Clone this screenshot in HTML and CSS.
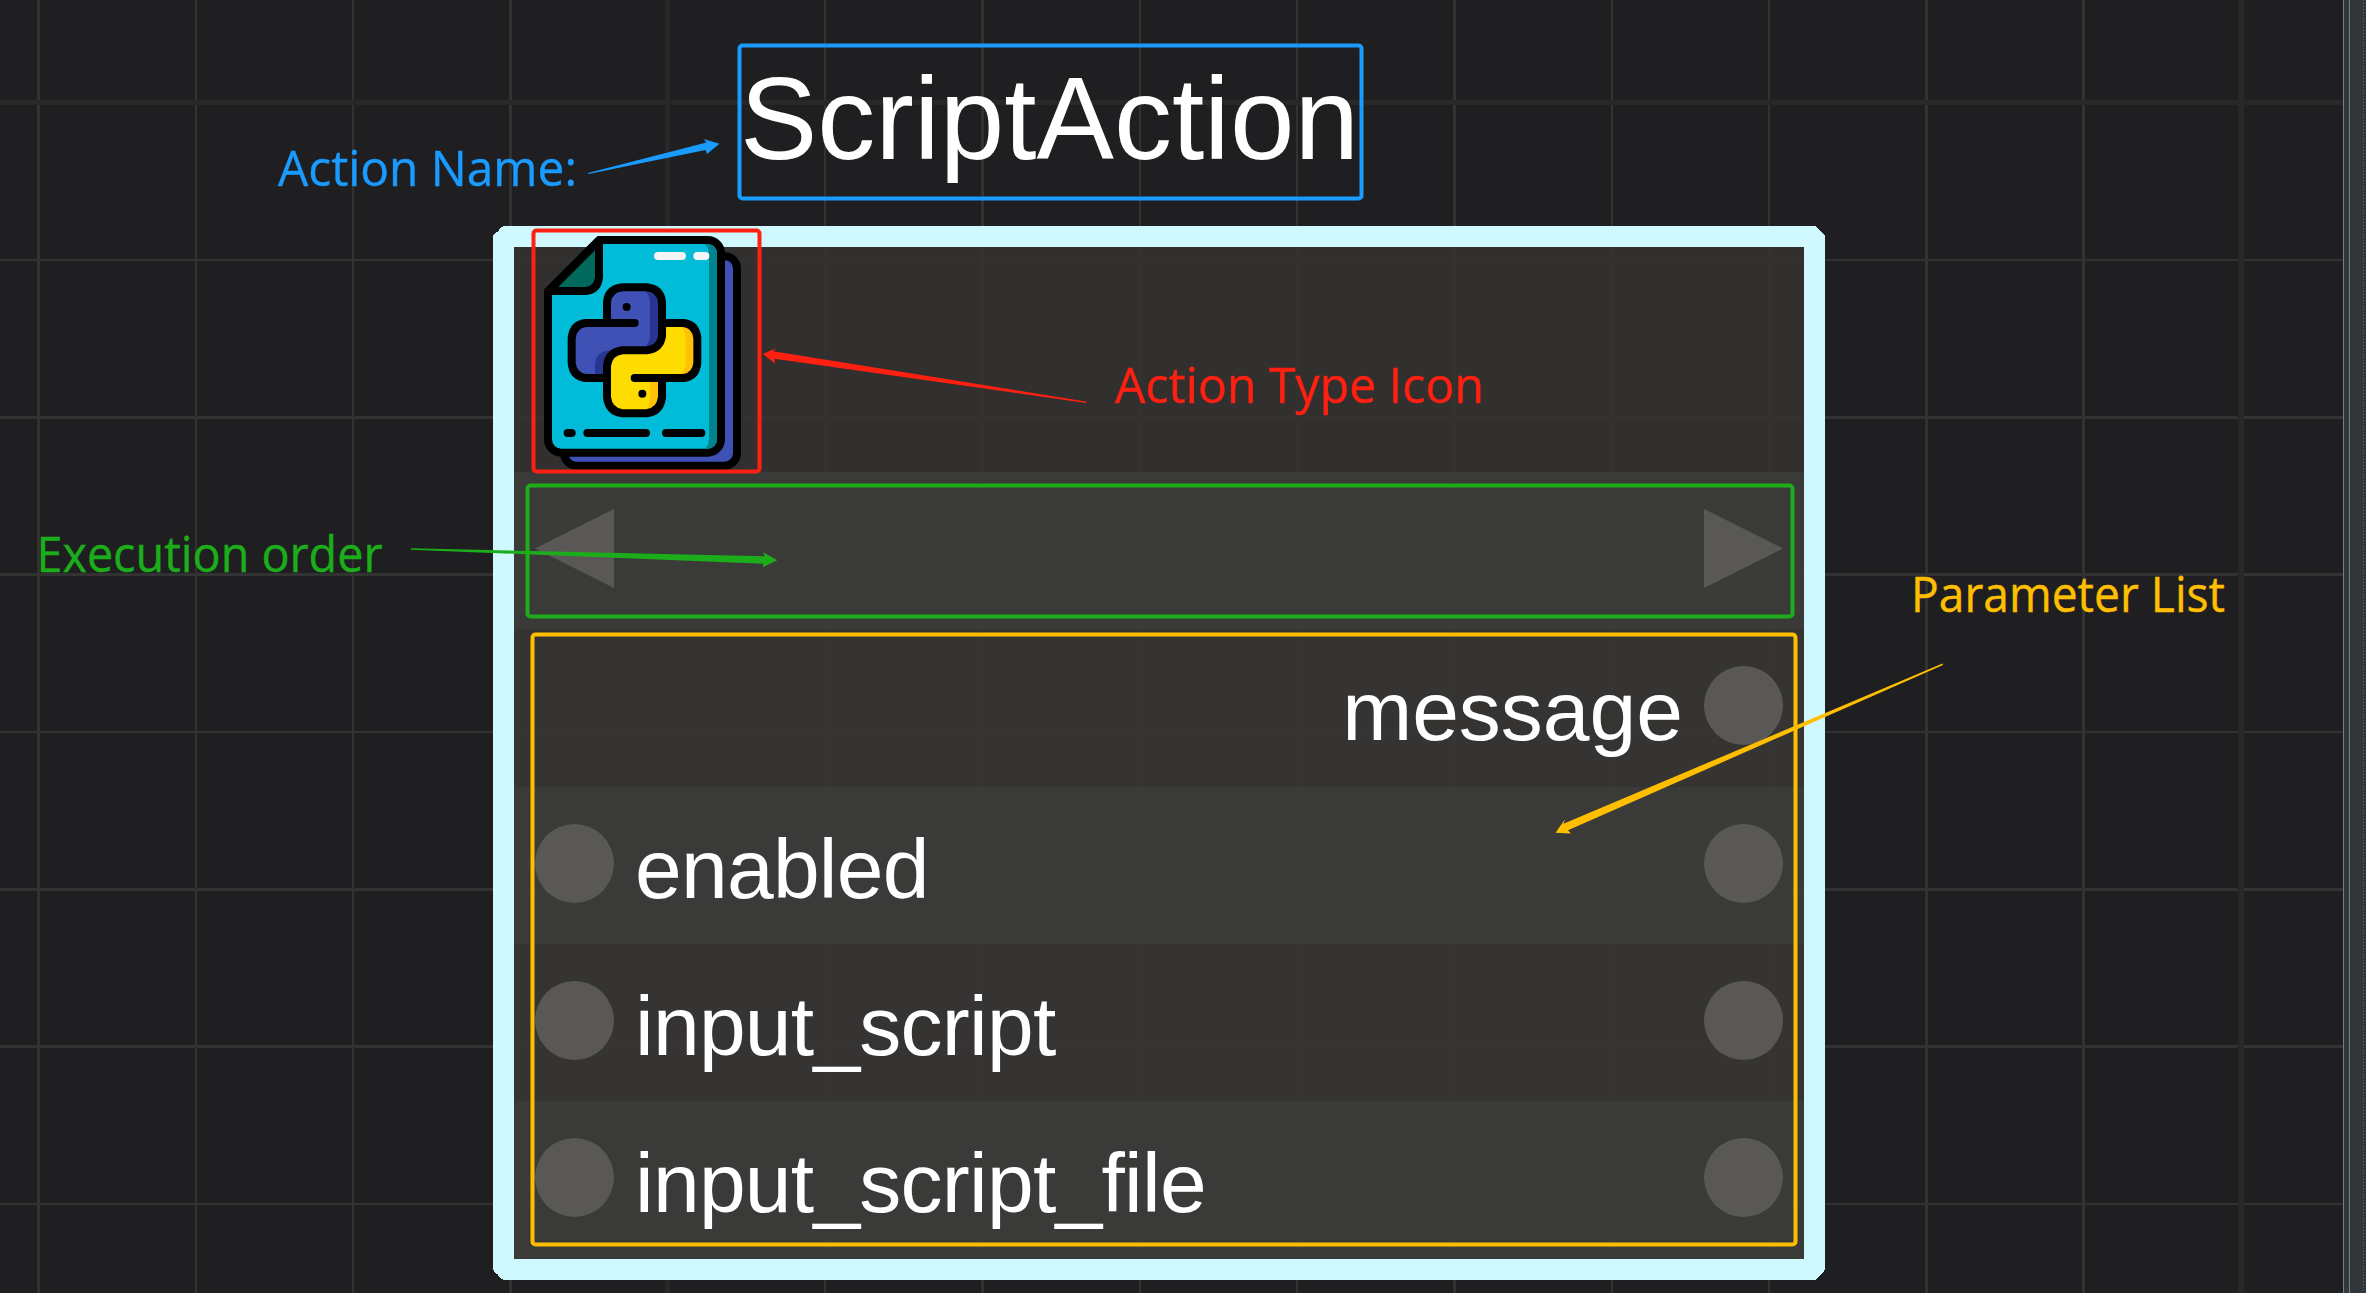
FILE: index.html
```
<!DOCTYPE html>
<html lang="en">
<head>
<meta charset="utf-8">
<title>ScriptAction</title>
<link rel="stylesheet" href="styles.css">
</head>
<body>
<main class="editor">
  <section class="canvas">
    <svg class="grid" width="2343" height="1293" shape-rendering="crispEdges">
      <path class="minor" stroke-width="2" d="M196 0V1293M353 0V1293M825 0V1293M1140 0V1293M1297 0V1293M1612 0V1293M1769 0V1293M0 260H2343M0 732H2343M0 1204H2343"/>
      <path class="minor" stroke-width="3" d="M38.500 0V1293M510.500 0V1293M982.500 0V1293M1454.500 0V1293M1926.500 0V1293M2083.500 0V1293M0 417.500H2343M0 574.500H2343M0 889.500H2343M0 1046.500H2343"/>
      <path class="major" stroke-width="5" d="M667.500 0V1293M0 102.500H2343"/>
      <path class="major" stroke-width="6" d="M2241 0V1293"/>
    </svg>

    <article class="node-group">
      <h1 class="node-title">ScriptAction</h1>
      <div class="node">
        <header class="row header">
          <svg class="type-icon" viewBox="0 0 960 840" width="320" height="280" fill="none" stroke-linecap="round" stroke-linejoin="round">
            <path d="M720 139H734A36 36 0 0 1 771 176V730A38 38 0 0 1 733 767H290A38 38 0 0 1 252 729V700Z" fill="#3f51b5" stroke="#000" stroke-width="24"/>
            <path d="M357 90H683A40 40 0 0 1 723 130V688A40 40 0 0 1 683 728H244A40 40 0 0 1 204 688V243Z" fill="#00bcd8" stroke="#000" stroke-width="24"/>
            <path d="M674 102H683A28 28 0 0 1 711 130V688A28 28 0 0 1 683 716H674Q687 706 687 686V132Q687 112 674 102Z" fill="#00838f"/>
            <path d="M357 92V202Q353 240 316 243H206Z" fill="#00695c" stroke="#000" stroke-width="24"/>
            <path d="M534 138H606M652 138H676" stroke="#f5f5f5" stroke-width="24"/>
            <path d="M546 339H612Q648 344 652 384V459Q648 499 612 504H546V562Q540 605 500 610H427Q386 605 381 562V467Q386 425 427 421H500Q540 415 546 378Z" fill="#ffdc00"/>
            <path d="M600 350H612Q640 355 640 384V459Q640 488 612 493H600Q617 484 617 459V384Q617 359 600 350Z" fill="#ffc107"/>
            <path d="M510 515H535V562Q533 593 500 598Q510 587 510 562Z" fill="#ffc107"/>
            <path d="M381 339V275Q386 236 427 232H500Q541 236 546 275V378Q541 416 500 421H427Q386 426 381 467V504H316Q279 499 275 459V384Q279 344 316 339Z" fill="#3f51b5"/>
            <path d="M494 244H500Q530 248 534 275V378Q530 405 497 409Q510 397 510 375V275Q508 252 494 244Z" fill="#283593"/>
            <path d="M392 421Q345 425 345 467V493H371V458Q372 438 392 421Z" fill="#283593"/>
            <path d="M464 339H316Q279 344 275 384V459Q279 499 316 504H381M381 339V275Q386 236 427 232H500Q541 236 546 275V378Q541 416 500 421H427Q386 426 381 467V562Q386 605 427 610H500Q541 605 546 562V504M464 504H612Q648 499 652 459V384Q648 344 612 339H546" stroke="#000" stroke-width="24"/>
            <circle cx="440" cy="291" r="12" fill="#000"/><circle cx="487" cy="551" r="12" fill="#000"/>
            <path d="M263 669H275M322 669H498M558 669H664" stroke="#000" stroke-width="24"/>
          </svg>
        </header>
        <div class="row even">
          <i class="port arrow-left"></i><span class="spacer"></span><i class="port arrow-right"></i>
        </div>
        <div class="row odd">
          <span class="spacer"></span><span class="name output">message</span><i class="port"></i>
        </div>
        <div class="row even">
          <i class="port"></i><span class="name">enabled</span><span class="spacer"></span><i class="port"></i>
        </div>
        <div class="row odd">
          <i class="port"></i><span class="name">input_script</span><span class="spacer"></span><i class="port"></i>
        </div>
        <div class="row even">
          <i class="port"></i><span class="name">input_script_file</span><span class="spacer"></span><i class="port"></i>
        </div>
      </div>
    </article>
  </section>
  <aside class="dock"><div class="splitter"></div><div class="panel"></div></aside>

  <svg class="notes" width="2366" height="1293">
    <g class="blue">
      <rect x="739.500" y="45.500" width="622" height="153" rx="3"/>
      <path d="M588 173L706.500 142.500L703.500 139L719.500 143.700L707 154L705.500 150L588.500 174Z"/>
      <text x="278" y="186" textLength="299" lengthAdjust="spacingAndGlyphs">Action Name:</text>
    </g>
    <g class="red">
      <rect x="533.500" y="230.500" width="226" height="241" rx="3"/>
      <path d="M1087 401.700L773 351.300L776.500 348L762.800 354L775 363.500L774.500 358.700L1086 403Z"/>
      <text x="1115" y="403" textLength="369" lengthAdjust="spacingAndGlyphs">Action Type Icon</text>
    </g>
    <g class="green">
      <rect x="527.500" y="485.500" width="1265" height="131" rx="3"/>
      <path d="M411 548.300L765 556.300L762.800 552L777.200 560.300L762.800 567.300L763.300 563.700L411 549.700Z"/>
      <text x="36.500" y="572" textLength="346" lengthAdjust="spacingAndGlyphs">Execution order</text>
    </g>
    <g class="amber">
      <rect x="532.500" y="634.500" width="1263" height="610" rx="3"/>
      <path d="M1942.500 663.500L1563.500 823.700L1565 819.300L1555.500 832.800L1571 833.500L1568 830.300L1943 665Z"/>
      <text x="1911" y="612" textLength="314" lengthAdjust="spacingAndGlyphs">Parameter List</text>
    </g>
  </svg>
</main>
</body>
</html>
```
FILE: styles.css
```
* { box-sizing: border-box; }
body { margin: 0; background: #1f1f21; overflow: hidden; }

.editor { display: flex; position: relative; width: 2366px; height: 1293px; }
.canvas { position: relative; flex: 1; height: 1293px; overflow: hidden; }
.grid { position: absolute; inset: 0; }
.minor { stroke: #323232; }
.major { stroke: #282828; }

.node-group { position: absolute; left: 493px; top: 46px; width: 1332px; }
.node-title {
  margin: 0 0 0 247px;
  height: 180px;
  color: #fff;
  font: 400 116px/147px "Liberation Sans", Arial, sans-serif;
}
.node {
  position: relative;
  height: 1054px;
  border: 21px solid #d0f8ff;
}
/* cut corners */
.node::before, .node::after {
  content: "";
  position: absolute;
  inset: -21px auto -21px -21px;
  width: 10px;
  background:
    linear-gradient(135deg, #1f1f21 50%, transparent 50%) 0 0 / 10px 10px no-repeat,
    linear-gradient(45deg, #1f1f21 50%, transparent 50%) 0 100% / 10px 10px no-repeat;
}
.node::after { inset: -21px -21px -21px auto; transform: scaleX(-1); }

.row { display: flex; align-items: flex-start; height: 157.350px; padding: 37px 21px 0 21px; }
.header { height: 225px; padding: 0; background: rgba(53, 51, 48, .87); }
.odd { background: rgba(55, 53, 51, .96); }
.even { background: rgba(59, 59, 57, .96); }
.type-icon { position: relative; flex: none; margin: -37px 0 0 -34px; }

.port { flex: none; width: 79px; height: 79px; border-radius: 50%; background: #595856; }
.arrow-left { border-radius: 0; clip-path: polygon(100% 0, 0 50%, 100% 100%); }
.arrow-right { border-radius: 0; clip-path: polygon(0 0, 100% 50%, 0 100%); }
.spacer { flex: 1; }
.name {
  margin: -3px 20px 0 21px;
  color: #fff;
  font: 400 84px/96px "Liberation Sans", Arial, sans-serif;
  letter-spacing: -.750px;
}
.output { margin-right: 21px; letter-spacing: 0; }

.dock { display: flex; width: 23px; background: #31363b; }
.splitter { width: 7px; border: solid #7a7d80; border-width: 0 1px; background: #33383c; }
.panel { flex: 1; background: repeating-linear-gradient(#62676b 0 1px, transparent 1px 3px) 13px 0 / 1px 100% no-repeat; }

.notes { position: absolute; inset: 0; }
.notes rect { fill: none; stroke: currentColor; stroke-width: 4; }
.notes path, .notes text { fill: currentColor; }
.notes text { font: 400 49px "Open Sans", "Noto Sans", sans-serif; stroke: currentColor; stroke-width: .4; }
.blue { color: #1a9bff; }
.red { color: #ff2012; }
.green { color: #1cad1a; }
.amber { color: #ffbf00; }
```
